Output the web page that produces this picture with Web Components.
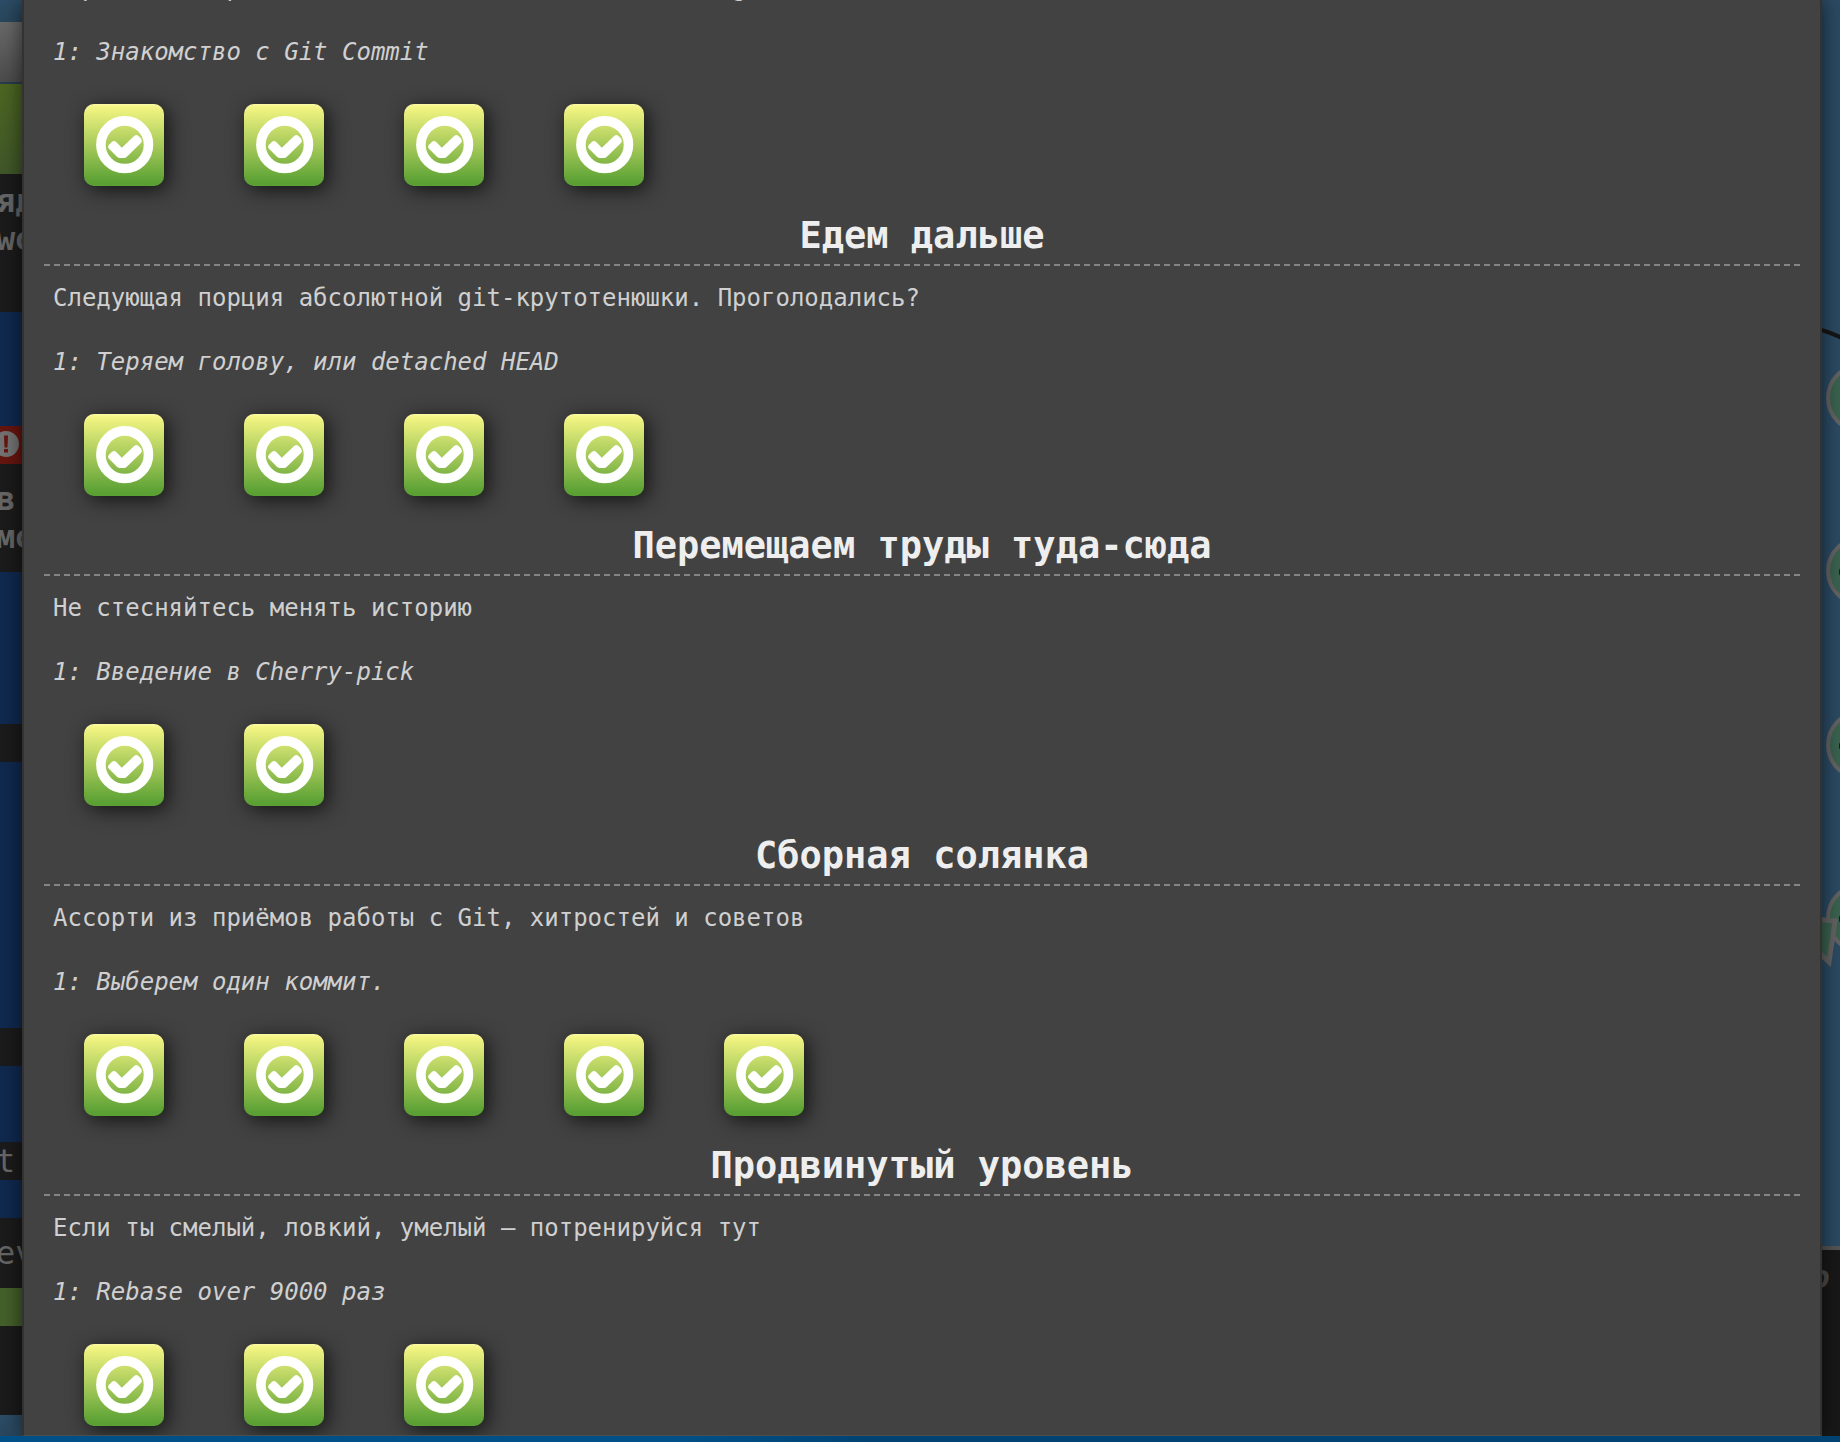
<!DOCTYPE html>
<html lang="ru">
<head>
<meta charset="utf-8">
<title>Learn Git Branching</title>
<style>
html, body { margin: 0; height: 100%; }
body { font-family: "DejaVu Sans Mono", "Liberation Mono", monospace; background: #2b4a63; overflow: hidden; }
</style>
</head>
<body>
<git-app>
  <terminal-strip slot="left"></terminal-strip>
  <levels-modal>
    <level-sequence about="Хорошо подобранное введение в основные команды git" current="1: Знакомство с Git Commit" count="4"></level-sequence>
    <level-sequence name="Едем дальше" about="Следующая порция абсолютной git-крутотенюшки. Проголодались?" current="1: Теряем голову, или detached HEAD" count="4"></level-sequence>
    <level-sequence name="Перемещаем труды туда-сюда" about="Не стесняйтесь менять историю" current="1: Введение в Cherry-pick" count="2"></level-sequence>
    <level-sequence name="Сборная солянка" about="Ассорти из приёмов работы с Git, хитростей и советов" current="1: Выберем один коммит." count="5"></level-sequence>
    <level-sequence name="Продвинутый уровень" about="Если ты смелый, ловкий, умелый — потренируйся тут" current="1: Rebase over 9000 раз" count="3"></level-sequence>
  </levels-modal>
  <tree-strip slot="right"></tree-strip>
</git-app>
<script>
class Base extends HTMLElement {
  connectedCallback() {
    if (this.shadowRoot) return;
    this.attachShadow({ mode: "open" }).innerHTML = this.render();
  }
}

customElements.define("git-app", class extends Base {
  render() {
    return `<style>
      :host { display: flex; flex-direction: column; height: 100vh; }
      .row { flex: 1; min-height: 0; display: flex; }
      .bar { position: relative; height: 6px; background: linear-gradient(90deg, #005088 0 36%, #004271 48%); }
    </style>
    <div class="row"><slot name="left"></slot><slot></slot><slot name="right"></slot></div>
    <div class="bar"></div>`;
  }
});

customElements.define("terminal-strip", class extends Base {
  render() {
    return `<style>
      :host { display: flex; flex-direction: column; width: 22px; overflow: hidden; background: #1b1b1b; color: #666; font-size: 32px; line-height: 38px; }
      div { flex: none; box-sizing: border-box; white-space: nowrap; }
      span { display: block; margin-left: -4px; }
      .sky { background: linear-gradient(#2c4d67, #29465c); }
      .title { background: linear-gradient(#696969, #4c4c4c); border-bottom: 2px solid #283c4e; }
      .tool { background: linear-gradient(#4d6622, #40572a); }
      .b { background: #10294f; }
      .r { background: #67150f; }
      .g { background: #44602a; }
      .bold { font-weight: bold; }
      svg { display: block; }
    </style>
    <div class="sky" style="height:22px"></div>
    <div class="title" style="height:62px"></div>
    <div class="tool" style="height:90px"></div>
    <div class="bold" style="height:138px;padding-top:8px"><span>яд</span><span>wo</span></div>
    <div class="b" style="height:114px"></div>
    <div class="r" style="height:38px"><svg width="22" height="38"><circle cx="6" cy="18" r="13" fill="#737373"/><path d="M4 9.5h4l-.5 12H4.5z" fill="#67150f"/><rect x="4" y="23" width="4" height="3.5" fill="#67150f"/></svg></div>
    <div class="bold" style="height:108px;padding-top:16px"><span>в</span><span>мо</span></div>
    <div class="b" style="height:152px"></div>
    <div style="height:38px"></div>
    <div class="b" style="height:266px"></div>
    <div style="height:38px"></div>
    <div class="b" style="height:76px"></div>
    <div style="height:38px"><span>t</span></div>
    <div class="b" style="height:38px"></div>
    <div style="height:70px;padding-top:16px"><span>ev</span></div>
    <div class="g" style="height:38px"></div>
    <div style="height:89px"></div>
    <div class="sky" style="flex:1"></div>`;
  }
});

customElements.define("tree-strip", class extends Base {
  render() {
    const node = y => `<circle cx="39" cy="${y}" r="33" fill="#3a624f" stroke="#636363" stroke-width="4"/>`;
    return `<style>
      :host { display: flex; flex-direction: column; width: 18px; overflow: hidden; background: #2b4a63; color: #4c4c4c; }
      svg { flex: none; display: block; }
      .goal { flex: 1; background: #181818; border-top: 4px solid #555; padding-top: 8px; font: italic bold 32px/38px "DejaVu Sans Mono", monospace; display: flex; justify-content: flex-end; }
      .goal span { margin-right: 10px; }
    </style>
    <svg width="18" height="1246">
      <path d="M-4 329Q8 332 22 339" fill="none" stroke="#151515" stroke-width="4"/>
      ${[398, 571, 745, 918].map(node).join("")}
      <path d="M17 570l2-3v10l-2-3zM17 744l2-3v10l-2-3zM17 917l2-3v10l-2-3z" fill="#12251c"/>
      <path d="M-8 919L13 921L7 962L-8 948Z" fill="#3a624f" stroke="#636363" stroke-width="5"/>
    </svg>
    <div class="goal"><span>o</span></div>`;
  }
});

customElements.define("levels-modal", class extends Base {
  render() {
    return `<style>
      :host { flex: 1; min-width: 0; position: relative; box-sizing: border-box; overflow: hidden; background: #424242; border: 2px solid #343230; border-top: 0; border-bottom: 1px solid #4d4d4d; box-shadow: 0 0 20px rgba(0,0,0,.6); padding: 0 20px; }
    </style><slot></slot>`;
  }
});

customElements.define("level-sequence", class extends Base {
  render() {
    const a = n => this.getAttribute(n);
    const heading = a("name") ? `<h3>${a("name")}</h3>` : "";
    return `<style>
      :host { display: block; padding-bottom: 24px; }
      :host(:first-child) { margin-top: -44px; }
      h3 { margin: 0; padding: 6px 0 8px; font-size: 37px; line-height: 40px; text-align: center; color: #eee; border-bottom: 2px dashed #858585; }
      p { margin: 0; padding: 16px 9px; font-size: 24px; line-height: 32px; color: #d0d0d0; }
      .icons { display: flex; gap: 80px; padding: 20px 40px 0; }
    </style>
    ${heading}<p>${a("about")}</p><p><i>${a("current")}</i></p>
    <div class="icons">${"<level-icon></level-icon>".repeat(+a("count"))}</div>`;
  }
});

customElements.define("level-icon", class extends Base {
  render() {
    return `<style>
      :host { display: block; }
      button { display: block; width: 80px; height: 82px; padding: 0; border: 0; border-radius: 10px; background: linear-gradient(#faf885, #5aa033 96%); box-shadow: inset 0 2px 1px rgba(255,255,255,.2), 4px 4px 20px rgba(0,0,0,.7); }
      svg { display: block; }
    </style>
    <button type="button" aria-label="Уровень пройден"><svg width="80" height="82" viewBox="0 0 80 82">
      <circle cx="40.7" cy="40.7" r="23.8" fill="none" stroke="#fff" stroke-width="9.6"/>
      <path d="M24.7 41L28 37.8Q30 36.2 32 37.8L37.8 43.8L50.4 31.7Q52.4 30.2 54.2 31.7L57.2 34.8Q58.4 36.8 57.2 38.8L42.6 53Q41.5 54 40 54H36Q34.5 54 33.2 53L24.7 44.6Q23.2 42.8 24.7 41Z" fill="#fff"/>
    </svg></button>`;
  }
});
</script>
</body>
</html>
